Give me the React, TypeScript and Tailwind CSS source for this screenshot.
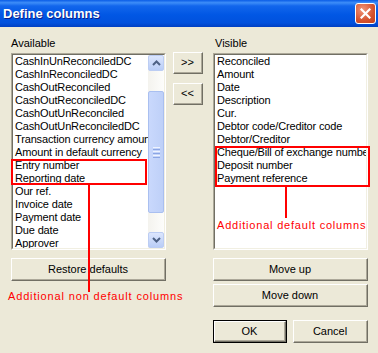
const availableItems = [
  "CashInUnReconciledDC",
  "CashInReconciledDC",
  "CashOutReconciled",
  "CashOutReconciledDC",
  "CashOutUnReconciled",
  "CashOutUnReconciledDC",
  "Transaction currency amount",
  "Amount in default currency",
  "Entry number",
  "Reporting date",
  "Our ref.",
  "Invoice date",
  "Payment date",
  "Due date",
  "Approver",
];

const visibleItems = [
  "Reconciled",
  "Amount",
  "Date",
  "Description",
  "Cur.",
  "Debtor code/Creditor code",
  "Debtor/Creditor",
  "Cheque/Bill of exchange number",
  "Deposit number",
  "Payment reference",
];

const font = "font-['Liberation_Sans',Arial,sans-serif]";

function Chevron({ up }: { up: boolean }) {
  return (
    <svg width="9" height="6" viewBox="0 0 9 6">
      <polyline
        points={up ? "1,5 4.5,1.5 8,5" : "1,1 4.5,4.5 8,1"}
        fill="none"
        stroke="#4D6185"
        strokeWidth="2"
      />
    </svg>
  );
}

function ScrollButton({ up }: { up: boolean }) {
  return (
    <div className="flex h-[16px] w-[16px] items-center justify-center rounded-[2px] border border-[#BCCDF3] bg-gradient-to-b from-[#DCE6FD] to-[#B9CDF7]">
      <Chevron up={up} />
    </div>
  );
}

function Scrollbar() {
  return (
    <div className="flex w-[16px] shrink-0 flex-col bg-gradient-to-r from-[#F4F3EE] to-[#FDFDFB]">
      <ScrollButton up />
      <div className="h-[20px]" />
      <div className="flex h-[122px] items-center justify-center rounded-[2px] border border-[#A9BFF0] bg-gradient-to-r from-[#C9D8FC] to-[#BED0F8]">
        <div className="flex flex-col gap-[1px]">
          <div className="h-[1px] w-[7px] bg-[#EEF3FE]" />
          <div className="h-[1px] w-[7px] bg-[#8CA6E4]" />
          <div className="h-[1px] w-[7px] bg-[#EEF3FE]" />
          <div className="h-[1px] w-[7px] bg-[#8CA6E4]" />
          <div className="h-[1px] w-[7px] bg-[#EEF3FE]" />
          <div className="h-[1px] w-[7px] bg-[#8CA6E4]" />
        </div>
      </div>
      <div className="flex-1" />
      <ScrollButton up={false} />
    </div>
  );
}

function ListBox({ items, scroll }: { items: string[]; scroll?: boolean }) {
  return (
    <div className="h-[197px] w-[155px] border border-t-[#ACA899] border-l-[#ACA899] border-b-white border-r-white">
      <div className="flex h-full w-full border border-t-[#716F64] border-l-[#716F64] border-b-[#F1EFE2] border-r-[#F1EFE2] bg-white">
        <div className="flex-1 overflow-hidden pl-[2px]">
          {items.map((item) => (
            <div key={item} className="h-[13px] whitespace-nowrap text-[11px] leading-[13px] tracking-[-0.15px] text-black">
              {item}
            </div>
          ))}
        </div>
        {scroll && <Scrollbar />}
      </div>
    </div>
  );
}

function Button({ label, width, primary }: { label: string; width: string; primary?: boolean }) {
  return (
    <div className={`${width} ${primary ? "border border-black" : ""}`}>
      <div className="flex h-full w-full items-center justify-center border border-t-white border-l-white border-b-[#716F64] border-r-[#716F64] bg-[#ECE9D8]">
        <div className="flex h-full w-full items-center justify-center border-b border-r border-b-[#ACA899] border-r-[#ACA899] text-[11px] text-black">
          {label}
        </div>
      </div>
    </div>
  );
}

export default function App() {
  return (
    <div className={`relative h-[353px] w-[378px] overflow-hidden bg-[#ECE9D8] ${font}`}>
      <header className="flex h-[27px] items-center justify-between bg-[linear-gradient(to_bottom,#0A5CE6_0%,#3D8DF8_10%,#1266EC_22%,#0157E4_55%,#0151DD_85%,#003FC2_100%)] pl-[3px] pr-[2px]">
        <span className="text-[13px] font-bold text-white [text-shadow:1px_1px_0_#0A1E8A]">
          Define columns
        </span>
        <div className="flex h-[21px] w-[21px] items-center justify-center rounded-[3px] border border-white bg-[radial-gradient(circle_at_35%_30%,#F0957A,#D5522E_60%,#C2401C)]">
          <svg width="11" height="11" viewBox="0 0 11 11">
            <path d="M1.5 1.5 L9.5 9.5 M9.5 1.5 L1.5 9.5" stroke="white" strokeWidth="2.2" strokeLinecap="square" />
          </svg>
        </div>
      </header>

      <div className="flex pl-[11px] pt-[10px] text-[11px] text-black">
        <div className="flex w-[155px] flex-col">
          <div className="h-[13px] leading-[13px]">Available</div>
          <div className="mt-[3px]">
            <ListBox items={availableItems} scroll />
          </div>
          <div className="mt-[8px] h-[23px]">
            <Button label="Restore defaults" width="w-[155px] h-[23px]" />
          </div>
        </div>

        <div className="ml-[7px] flex flex-col gap-[9px] pt-[15px]">
          <Button label=">>" width="w-[30px] h-[22px]" />
          <Button label="<<" width="w-[30px] h-[22px]" />
        </div>

        <div className="ml-[10px] flex w-[155px] flex-col">
          <div className="h-[13px] pl-[2px] leading-[13px]">Visible</div>
          <div className="mt-[3px]">
            <ListBox items={visibleItems} />
          </div>
          <div className="mt-[8px] flex flex-col gap-[3px]">
            <Button label="Move up" width="w-[155px] h-[23px]" />
            <Button label="Move down" width="w-[155px] h-[23px]" />
          </div>
          <div className="mt-[13px] flex gap-[6px]">
            <Button label="OK" width="w-[74px] h-[23px]" primary />
            <Button label="Cancel" width="w-[75px] h-[23px]" />
          </div>
        </div>
      </div>

      {/* annotations */}
      <div className="absolute left-[11px] top-[159px] h-[26px] w-[136px] border-2 border-[#FF0000]" />
      <div className="absolute left-[88px] top-[185px] h-[107px] w-[2px] bg-[#FF0000]" />
      <div className="absolute left-[8px] top-[290px] text-[11px] leading-[13px] tracking-[0.85px] text-[#FF0000]">
        Additional non default columns
      </div>

      <div className="absolute left-[215px] top-[146px] h-[41px] w-[155px] border-2 border-[#FF0000]" />
      <div className="absolute left-[285px] top-[187px] h-[31px] w-[2px] bg-[#FF0000]" />
      <div className="absolute left-[217px] top-[219px] text-[11px] leading-[13px] tracking-[0.8px] text-[#FF0000]">
        Additional default columns
      </div>
    </div>
  );
}
